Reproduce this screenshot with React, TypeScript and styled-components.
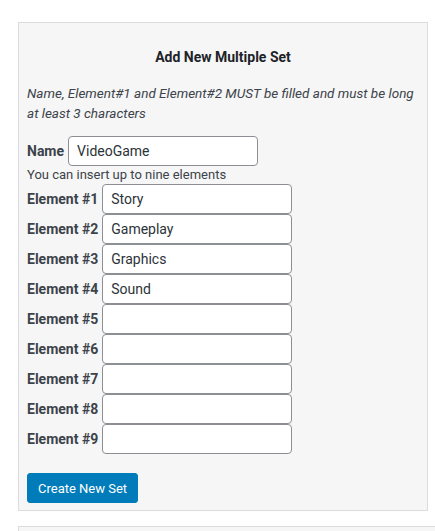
import React from 'react'
import styled, { createGlobalStyle } from 'styled-components'

const GlobalStyle = createGlobalStyle`
  html, body {
    margin: 0;
    padding: 0;
    background: #ffffff;
    font-family: Roboto, "Liberation Sans", sans-serif;
    color: #3c434a;
    overflow: hidden;
  }
`

const elements = ['Story', 'Gameplay', 'Graphics', 'Sound', '', '', '', '', '']

export default function App() {
  return (
    <>
      <GlobalStyle />
      <Page>
        <Panel>
          <Title>Add New Multiple Set</Title>
          <Notice>
            Name, Element#1 and Element#2 MUST be filled and must be long at least 3 characters
          </Notice>
          <Row>
            <Label>Name</Label>
            <TextInput defaultValue="VideoGame" />
          </Row>
          <Hint>You can insert up to nine elements</Hint>
          <ElementList>
            {elements.map((value, i) => (
              <Row key={i}>
                <Label>Element #{i + 1}</Label>
                <TextInput defaultValue={value} />
              </Row>
            ))}
          </ElementList>
          <CreateButton type="button">Create New Set</CreateButton>
        </Panel>
        <NextPanel />
      </Page>
    </>
  )
}

const Page = styled.div`
  height: 531px;
  overflow: hidden;
  display: flex;
  flex-direction: column;
  gap: 15px;
  padding: 22px 0 0 18px;
  box-sizing: border-box;
`
const Panel = styled.div`
  width: 392px;
  flex-shrink: 0;
  background: #f6f6f6;
  border: 1px solid #dcdcde;
  padding: 24px 8px 7px 8px;
  display: flex;
  flex-direction: column;
  align-items: flex-start;
`
const NextPanel = styled.div`
  width: 417px;
  height: 40px;
  flex-shrink: 0;
  background: #f6f6f6;
  border: 1px solid #dcdcde;
  border-right: none;
`
const Title = styled.h3`
  align-self: stretch;
  margin: 0;
  font-size: 14px;
  line-height: 20px;
  font-weight: 700;
  text-align: center;
  color: #1d2327;
`
const Notice = styled.p`
  margin: 16px 0 13px 0;
  font-size: 13.5px;
  line-height: 20px;
  font-style: italic;
  color: #3c434a;
`
const Row = styled.div`
  display: flex;
  align-items: center;
  gap: 4px;
  height: 30px;
`
const Label = styled.label`
  font-size: 14px;
  font-weight: 700;
  color: #3c434a;
`
const TextInput = styled.input`
  box-sizing: border-box;
  width: 190px;
  height: 30px;
  padding: 0 8px;
  border: 1px solid #8c8f94;
  border-radius: 4px;
  background: #ffffff;
  font-family: Roboto, "Liberation Sans", sans-serif;
  font-size: 14px;
  color: #2c3338;
  outline: none;
`
const Hint = styled.div`
  font-size: 13px;
  line-height: 18px;
  color: #3c434a;
`
const ElementList = styled.div`
  display: flex;
  flex-direction: column;
`
const CreateButton = styled.button`
  margin-top: 19px;
  height: 30px;
  padding: 0 10px;
  background: #007cba;
  border: 1px solid #007cba;
  border-radius: 3px;
  color: #ffffff;
  font-family: Roboto, "Liberation Sans", sans-serif;
  font-size: 13px;
  cursor: pointer;
`
